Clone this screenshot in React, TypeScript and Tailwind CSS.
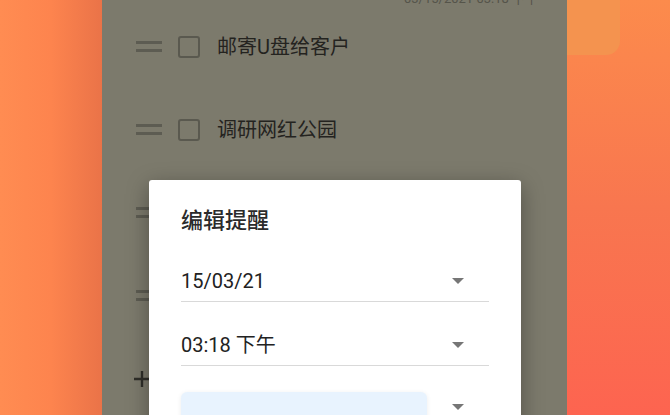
const font = "font-['Roboto','Noto_Sans_CJK_SC',sans-serif]";

// rows 3 and 4 sit under the dialog, only their handles peek out
const tasks = ["邮寄U盘给客户", "调研网红公园", "", ""];

function Handle() {
  return (
    <div className="flex w-[26px] flex-col gap-[5px]">
      <div className="h-[3px] w-full bg-[#5d5c52]" />
      <div className="h-[3px] w-full bg-[#5d5c52]" />
    </div>
  );
}

function TaskRow({ label }: { label: string }) {
  return (
    <div className="flex h-[83px] items-center pl-[34px]">
      <Handle />
      <div className="ml-[16px] h-[22px] w-[22px] rounded-[3px] border-2 border-[#5a594f]" />
      {label && <span className="ml-[17px] text-[20px] leading-none text-[#24231f]">{label}</span>}
    </div>
  );
}

function Arrow() {
  return (
    <svg width="12" height="6" viewBox="0 0 12 6" className="mr-[25px] shrink-0">
      <path d="M0 0h12L6 6z" fill="#767676" />
    </svg>
  );
}

function Field({ value }: { value: string }) {
  return (
    <div className="flex h-[41px] items-center justify-between border-b border-[#d9d9d9]">
      <span className="text-[20px] leading-none text-[#222]">{value}</span>
      <Arrow />
    </div>
  );
}

function EditReminderDialog() {
  return (
    <div className="absolute left-[47px] top-[180px] h-[260px] w-[372px] rounded-t-[3px] bg-white px-[32px] pt-[27px] shadow-[0_6px_22px_rgba(0,0,0,0.35)]">
      <h2 className="text-[22px] font-medium leading-[28px] text-[#2b2b2b]">编辑提醒</h2>
      <div className="mt-[26px]">
        <Field value="15/03/21" />
      </div>
      <div className="mt-[23px]">
        <Field value="03:18 下午" />
      </div>
      <div className="mt-[26px] flex items-start justify-between">
        <div className="h-[40px] w-[246px] rounded-[6px] bg-[#e8f3fe] shadow-[0_1px_5px_rgba(0,0,0,0.08)]" />
        <div className="mt-[12px]">
          <Arrow />
        </div>
      </div>
    </div>
  );
}

export default function App() {
  return (
    <div className={`flex h-[415px] w-[670px] overflow-hidden ${font}`}>
      <div className="h-full w-[102px] bg-gradient-to-r from-[#ff8c52] via-[#fd844e] to-[#ea7348]" />

      <div className="relative h-full w-[465px] bg-[#7c7a6c]">
        <div className="flex h-[5px] items-end justify-end overflow-hidden pr-[29px]">
          <span className="text-[13px] leading-none text-[#55544a]">03/15/2021 03:18 下午</span>
        </div>
        {tasks.map((t, i) => (
          <TaskRow key={i} label={t} />
        ))}
        <div className="flex h-[83px] items-center pl-[31px]">
          <svg width="18" height="18" viewBox="0 0 18 18">
            <path d="M9 1v16M1 9h16" stroke="#2f2e29" strokeWidth="2.4" />
          </svg>
        </div>
        <EditReminderDialog />
      </div>

      <div className="h-full w-[103px] bg-gradient-to-b from-[#fc8b4c] via-[#f8764f] to-[#fd6450]">
        <div className="h-[55px] w-[53px] rounded-br-[14px] bg-[#f4934f]" />
      </div>
    </div>
  );
}
